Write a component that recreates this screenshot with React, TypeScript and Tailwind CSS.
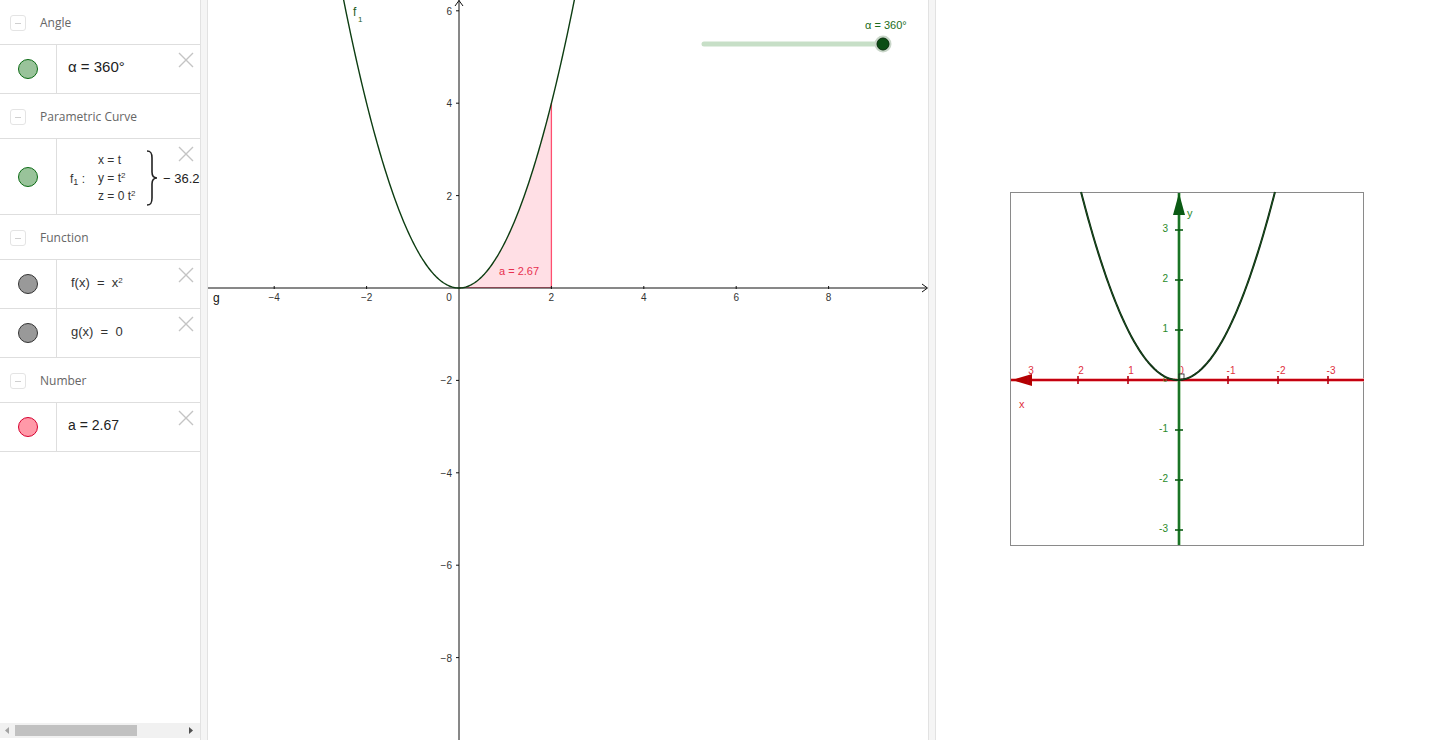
import React from "react";

const FONT = { fontFamily: "'Liberation Sans', Arial, sans-serif" };

function CollapseIcon() {
  return (
    <div className="ml-[10px] w-[16px] h-[16px] border border-[#e4e4e4] rounded-[3px] flex items-center justify-center">
      <div className="w-[6px] h-[1px] bg-[#cfcfcf]" />
    </div>
  );
}

function Header({ label }: { label: string }) {
  return (
    <div className="h-[45px] flex items-center border-b border-[#dedede] shrink-0 pt-[2px]">
      <CollapseIcon />
      <span className="ml-[14px] text-[12px] text-[#666]" style={{ fontFamily: "'Open Sans', sans-serif" }}>
        {label}
      </span>
    </div>
  );
}

function XIcon() {
  return (
    <svg className="absolute top-[6px] right-[5px]" width="18" height="18" viewBox="0 0 18 18">
      <path d="M2 2 L16 16 M16 2 L2 16" stroke="#c4c4c4" strokeWidth="1.4" fill="none" />
    </svg>
  );
}

function Row({
  h,
  fill,
  border,
  children,
}: {
  h: string;
  fill: string;
  border: string;
  children: React.ReactNode;
}) {
  return (
    <div className={`${h} flex border-b border-[#dedede] relative shrink-0`}>
      <div className="w-[57px] border-r border-[#dedede] flex items-center justify-center shrink-0">
        <div className={`w-[20px] h-[20px] rounded-full border ${fill} ${border}`} />
      </div>
      <div className="flex-1 flex items-center overflow-hidden whitespace-nowrap">{children}</div>
      <XIcon />
    </div>
  );
}

function AlgebraPanel() {
  return (
    <div className="w-[200px] h-full flex flex-col bg-white shrink-0 overflow-hidden" style={FONT}>
      <Header label="Angle" />
      <Row h="h-[49px]" fill="bg-[#99c39a]" border="border-[#0b6b14]">
        <span className="ml-[11px] text-[15px] text-[#222] -mt-[3px]">α = 360°</span>
      </Row>
      <Header label="Parametric Curve" />
      <Row h="h-[76px]" fill="bg-[#99c39a]" border="border-[#0b6b14]">
        <div className="ml-[13px] flex items-center text-[12px] text-[#333]">
          <span className="w-[28px] mt-[4px]">
            f<sub className="text-[9px]">1</sub> :
          </span>
          <div className="flex flex-col leading-[18px] mt-[2px] w-[48px]">
            <span>x = t</span>
            <span>
              y = t<sup className="text-[8px]">2</sup>
            </span>
            <span>
              z = 0 t<sup className="text-[8px]">2</sup>
            </span>
          </div>
          <svg width="12" height="56" viewBox="0 0 12 56" className="mt-[2px]">
            <path
              d="M1 1 C5 1 6 3 6 8 L6 22 C6 26 7 28 11 28 C7 28 6 30 6 34 L6 48 C6 53 5 55 1 55"
              stroke="#222"
              strokeWidth="1.6"
              fill="none"
            />
          </svg>
          <span className="ml-[5px] mt-[4px] text-[13px] text-[#222]">− 36.28</span>
        </div>
      </Row>
      <Header label="Function" />
      <Row h="h-[49px]" fill="bg-[#999999]" border="border-[#333]">
        <span className="ml-[14px] text-[13px] text-[#333] -mt-[3px]">
          f(x)&nbsp; =&nbsp; x<sup className="text-[8px]">2</sup>
        </span>
      </Row>
      <Row h="h-[49px]" fill="bg-[#999999]" border="border-[#333]">
        <span className="ml-[14px] text-[13px] text-[#333] -mt-[3px]">g(x)&nbsp; =&nbsp; 0</span>
      </Row>
      <Header label="Number" />
      <Row h="h-[49px]" fill="bg-[#ff99a8]" border="border-[#d6002f]">
        <span className="ml-[11px] text-[14px] text-[#222] -mt-[3px]">a = 2.67</span>
      </Row>
      <div className="flex-1" />
      <div className="h-[15px] bg-[#f1f1f1] flex items-center shrink-0 mb-[2px]">
        <svg width="15" height="15" viewBox="0 0 15 15">
          <path d="M5 7.5 L9 4 L9 11 Z" fill="#a3a3a3" />
        </svg>
        <div className="w-[122px] h-[11px] bg-[#c1c1c1]" />
        <div className="flex-1" />
        <svg width="15" height="15" viewBox="0 0 15 15" className="mr-[2px]">
          <path d="M10 7.5 L6 4 L6 11 Z" fill="#505050" />
        </svg>
      </div>
    </div>
  );
}

function Splitter() {
  return <div className="w-[8px] h-full bg-[#f5f5f5] border-l border-r border-[#e2e2e2] shrink-0" />;
}

const S = 46.2;
const OX = 251;
const OY = 288;

function parabolaPath(x0: number, x1: number, ox: number, oy: number, s: number) {
  const pts: string[] = [];
  for (let i = 0; i <= 200; i++) {
    const x = x0 + ((x1 - x0) * i) / 200;
    pts.push(`${(ox + x * s).toFixed(2)},${(oy - x * x * s).toFixed(2)}`);
  }
  return "M" + pts.join(" L");
}

function areaPath() {
  const pts: string[] = [];
  for (let i = 0; i <= 100; i++) {
    const x = (2 * i) / 100;
    pts.push(`${(OX + x * S).toFixed(2)},${(OY - x * x * S).toFixed(2)}`);
  }
  return `M${OX},${OY} L` + pts.join(" L") + ` L${OX + 2 * S},${OY} Z`;
}

function GraphicsView() {
  const xs = [-4, -2, 2, 4, 6, 8];
  const ys = [6, 4, 2, -2, -4, -6, -8];
  return (
    <div className="w-[720px] h-full shrink-0 bg-white">
      <svg width="720" height="740" viewBox="0 0 720 740" style={FONT}>
        <path d={areaPath()} fill="#ffdfe5" />
        <line x1={OX + 2 * S} y1={OY} x2={OX + 2 * S} y2={OY - 4 * S} stroke="#ff4f70" strokeWidth="1.3" />
        <line x1={OX} y1={OY - 0.5} x2={OX + 2 * S} y2={OY - 0.5} stroke="#ff7f95" strokeWidth="1" />
        {/* axes */}
        <line x1="0" y1={OY} x2="719" y2={OY} stroke="#111" strokeWidth="1" />
        <path d={`M714 ${OY - 4} L719.5 ${OY} L714 ${OY + 4}`} stroke="#111" fill="none" strokeWidth="1" />
        <line x1={OX} y1="0" x2={OX} y2="740" stroke="#111" strokeWidth="1" />
        <path d={`M${OX - 4} 6 L${OX} 0.5 L${OX + 4} 6`} stroke="#111" fill="none" strokeWidth="1" />
        {xs.map((v) => (
          <g key={"x" + v}>
            <line x1={OX + v * S} y1={OY - 2} x2={OX + v * S} y2={OY + 1} stroke="#111" />
            <text x={OX + v * S} y={OY + 13} fontSize="10" fill="#333" textAnchor="middle">
              {v < 0 ? "−" + -v : v}
            </text>
          </g>
        ))}
        <text x={OX - 10} y={OY + 13} fontSize="10" fill="#333" textAnchor="middle">
          0
        </text>
        {ys.map((v) => (
          <g key={"y" + v}>
            <line x1={OX - 3} y1={OY - v * S} x2={OX} y2={OY - v * S} stroke="#111" />
            <text x={OX - 7} y={OY - v * S + 4} fontSize="10" fill="#333" textAnchor="end">
              {v < 0 ? "−" + -v : v}
            </text>
          </g>
        ))}
        <path d={parabolaPath(-2.6, 2.6, OX, OY, S)} stroke="#0d3d12" strokeWidth="1.4" fill="none" />
        <text x="145" y="16" fontSize="12" fill="#1e5e1e">
          f
        </text>
        <text x="150" y="22" fontSize="8" fill="#1e5e1e">
          1
        </text>
        <text x="5" y="302" fontSize="12" fill="#111">
          g
        </text>
        <text x="291" y="275" fontSize="11" fill="#e8304f">
          a = 2.67
        </text>
        {/* slider */}
        <line x1="496" y1="44" x2="675" y2="44" stroke="#c7dfc7" strokeWidth="5" strokeLinecap="round" />
        <circle cx="675" cy="44" r="8.5" fill="#c9d6c9" />
        <circle cx="675" cy="44" r="6" fill="#0b4d14" stroke="#062d0a" strokeWidth="1" />
        <text x="657" y="29" fontSize="11" fill="#1b6c1b">
          α = 360°
        </text>
      </svg>
    </div>
  );
}

function View3D() {
  const OX2 = 242;
  const OY2 = 380;
  const s = 50;
  const xt = [3, 2, 1, -1, -2, -3];
  const yt = [3, 2, 1, -1, -2, -3];
  const xm = Math.sqrt((OY2 - 192) / s);
  return (
    <div className="flex-1 h-full bg-white">
      <svg width="504" height="740" viewBox="0 0 504 740" style={FONT}>
        <rect x="74.5" y="192.5" width="353" height="353" fill="white" stroke="#8a8a8a" strokeWidth="1" />
        {/* x axis */}
        <line x1="75" y1={OY2} x2="428" y2={OY2} stroke="#f0a0a0" strokeWidth="3.5" />
        <line x1="75" y1={OY2} x2="428" y2={OY2} stroke="#c40010" strokeWidth="1.8" />
        <path d={`M76 ${OY2} L96 ${OY2 - 6} L96 ${OY2 + 6} Z`} fill="#b30000" />
        {xt.map((v) => {
          const px = OX2 - v * s;
          return (
            <g key={"rx" + v}>
              <line x1={px} y1={OY2 - 4} x2={px} y2={OY2 + 4} stroke="#b30010" strokeWidth="1.6" />
              <text x={px + 3} y={OY2 - 6} fontSize="10" fill="#e03040" textAnchor="middle">
                {v < 0 ? "-" + -v : v}
              </text>
            </g>
          );
        })}
        <text x={OX2 + 3} y={OY2 - 6} fontSize="10" fill="#e03040" textAnchor="middle">
          0
        </text>
        <text x="83" y="408" fontSize="11" fill="#e03040">
          x
        </text>
        {/* y axis */}
        <line x1={OX2 + 1} y1="193" x2={OX2 + 1} y2="545" stroke="#9cc99c" strokeWidth="3.5" />
        <line x1={OX2 + 1} y1="193" x2={OX2 + 1} y2="545" stroke="#0d6b1a" strokeWidth="1.8" />
        <path d={`M${OX2 + 1} 193 L${OX2 - 5} 215 L${OX2 + 7} 215 Z`} fill="#0b5a14" />
        {yt.map((v) => {
          const py = OY2 - v * s;
          return (
            <g key={"ry" + v}>
              <line x1={OX2 - 3} y1={py} x2={OX2 + 5} y2={py} stroke="#0b5a14" strokeWidth="1.6" />
              <text x={OX2 - 10} y={py + 2} fontSize="10" fill="#2a8a2a" textAnchor="end">
                {v < 0 ? "-" + -v : v}
              </text>
            </g>
          );
        })}
        <text x={OX2 - 15} y={OY2 + 2} fontSize="8" fill="#2a8a2a">
          0
        </text>
        <rect x={OX2 + 1} y={OY2 - 6} width="5" height="5" fill="none" stroke="#222" strokeWidth="0.8" />
        <text x="251" y="217" fontSize="11" fill="#2a8a2a">
          y
        </text>
        <path d={parabolaPath(-xm, xm, OX2, OY2, s)} stroke="#0a1f0c" strokeWidth="2" fill="none" />
        <path d={parabolaPath(-xm, xm, OX2, OY2, s)} stroke="#1f6a26" strokeWidth="0.7" fill="none" />
      </svg>
    </div>
  );
}

export default function App() {
  return (
    <div className="w-[1440px] h-[740px] flex bg-white overflow-hidden">
      <AlgebraPanel />
      <Splitter />
      <GraphicsView />
      <Splitter />
      <View3D />
    </div>
  );
}
